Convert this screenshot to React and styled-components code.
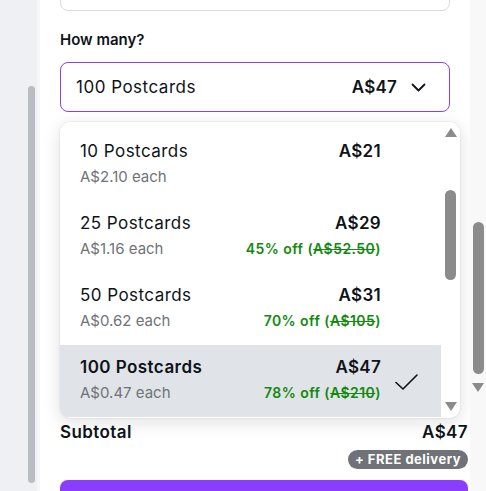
import React from "react";
import styled, { createGlobalStyle } from "styled-components";

const GlobalStyle = createGlobalStyle`
  html, body {
    margin: 0;
    padding: 0;
    height: 491px;
    overflow: hidden;
    background: #ffffff;
  }
  body {
    font-family: "Inter", "Noto Sans", sans-serif;
    color: #0e1318;
  }
`;

const Page = styled.div`
  display: flex;
  width: 486px;
  height: 491px;
  overflow: hidden;
`;

const LeftRail = styled.div`
  width: 40px;
  flex: none;
  background: #eff0f3;
  border-right: 3px solid #f6f7f8;
  padding: 86px 0 0 28px;
  box-sizing: border-box;
`;

const RailThumb = styled.div`
  width: 7px;
  height: 397px;
  border-radius: 4px;
  background: #b9bdc2;
`;

const Panel = styled.div`
  flex: 1;
  display: flex;
  flex-direction: column;
  padding: 0 2px 0 20px;
  background: #ffffff;
`;

const RightStrip = styled.div`
  width: 16px;
  flex: none;
  background: #f8f8f9;
  display: flex;
  flex-direction: column;
  align-items: center;
  padding-top: 222px;
  box-sizing: border-box;
`;

const Thumb = styled.div`
  width: 11px;
  height: ${(p) => p.$h}px;
  margin-top: ${(p) => p.$top || 0}px;
  border-radius: 6px;
  background: #8b8b8b;
  flex: none;
`;

const Arrow = styled.div`
  width: 0;
  height: 0;
  flex: none;
  border-left: 6px solid transparent;
  border-right: 6px solid transparent;
  ${(p) =>
    p.$up
      ? "border-bottom: 9px solid #8b8b8b;"
      : "border-top: 9px solid #8b8b8b;"}
  margin-top: ${(p) => p.$top || 0}px;
`;

const TopField = styled.div`
  height: 48px;
  margin: -37px 18px 0 0;
  border: 1px solid #d9dbdf;
  border-radius: 8px;
  box-sizing: border-box;
  flex: none;
`;

const Label = styled.div`
  margin-top: 19px;
  font-size: 15px;
  line-height: 20px;
  font-weight: 600;
`;

const Select = styled.div`
  margin: 12px 18px 0 0;
  height: 50px;
  flex: none;
  border: 1px solid #8b3dff;
  border-radius: 8px;
  box-sizing: border-box;
  display: flex;
  align-items: center;
  padding: 0 23px 0 15px;
  font-size: 17px;
  letter-spacing: 0.5px;
`;

const SelectText = styled.span`
  flex: 1;
`;

const SelectPrice = styled.span`
  font-weight: 600;
  letter-spacing: 0.2px;
  margin-right: 14px;
`;

const Listbox = styled.div`
  margin-top: 10px;
  width: 400px;
  height: 296px;
  flex: none;
  display: flex;
  border-radius: 10px;
  overflow: hidden;
  background: #ffffff;
  box-shadow: 0 0 0 1px rgba(14, 19, 24, 0.04), 0 4px 18px rgba(14, 19, 24, 0.13);
`;

const Options = styled.div`
  flex: 1;
  padding-top: 7px;
`;

const Option = styled.div`
  height: 72px;
  box-sizing: border-box;
  display: grid;
  grid-template-columns: 1fr auto 60px;
  grid-template-rows: 22px 20px;
  row-gap: 5px;
  align-content: start;
  padding: 11px 0 0 20px;
  background: ${(p) => (p.$selected ? "#e0e3e7" : "transparent")};
`;

const Title = styled.div`
  font-size: 17px;
  letter-spacing: 0.45px;
  line-height: 22px;
  font-weight: ${(p) => (p.$selected ? 600 : 400)};
`;

const Sub = styled.div`
  font-size: 15px;
  line-height: 20px;
  color: #6f7378;
`;

const Price = styled.div`
  font-size: 17px;
  letter-spacing: 0.3px;
  line-height: 22px;
  font-weight: 600;
  text-align: right;
`;

const Discount = styled.div`
  font-size: 14px;
  letter-spacing: 0.45px;
  line-height: 20px;
  font-weight: 600;
  color: #14890f;
  text-align: right;
  s {
    text-decoration-thickness: 1px;
  }
`;

const CheckCell = styled.div`
  grid-column: 3;
  grid-row: 1 / 3;
  display: flex;
  align-items: center;
  padding: 4px 0 0 14px;
`;

const ListScroll = styled.div`
  width: 19px;
  flex: none;
  display: flex;
  flex-direction: column;
  align-items: center;
  padding: 6px 0 7px;
  box-sizing: border-box;
`;

const Spacer = styled.div`
  flex: 1;
`;

const SubtotalRow = styled.div`
  margin-top: 3px;
  display: flex;
  justify-content: space-between;
  font-size: 17px;
  letter-spacing: 0.4px;
  line-height: 22px;
  font-weight: 600;
`;

const Pill = styled.div`
  align-self: flex-end;
  margin-top: 7px;
  height: 19px;
  padding: 0 7px;
  border-radius: 10px;
  background: #6f7277;
  color: #ffffff;
  font-size: 13px;
  letter-spacing: 0.5px;
  font-weight: 700;
  line-height: 19px;
`;

const BuyButton = styled.div`
  margin-top: 11px;
  height: 48px;
  flex: none;
  border-radius: 8px;
  background: #8b3dff;
`;

const options = [
  { qty: 10, price: 21, each: "2.10" },
  { qty: 25, price: 29, each: "1.16", off: 45, was: "52.50" },
  { qty: 50, price: 31, each: "0.62", off: 70, was: "105" },
  { qty: 100, price: 47, each: "0.47", off: 78, was: "210", selected: true },
];

const Check = () => (
  <svg width="23" height="16" viewBox="0 0 23 16" fill="none">
    <path d="M1 8.5l7 6.5L22 1" stroke="#0e1318" strokeWidth="1.6" strokeLinecap="round" strokeLinejoin="round" />
  </svg>
);

const Chevron = () => (
  <svg width="15" height="9" viewBox="0 0 15 9" fill="none">
    <path d="M1.5 1.5l6 6 6-6" stroke="#0e1318" strokeWidth="1.8" strokeLinecap="round" strokeLinejoin="round" />
  </svg>
);

export default function App() {
  return (
    <Page>
      <GlobalStyle />
      <LeftRail>
        <RailThumb />
      </LeftRail>
      <Panel>
        <TopField />
        <Label>How many?</Label>
        <Select>
          <SelectText>100 Postcards</SelectText>
          <SelectPrice>A$47</SelectPrice>
          <Chevron />
        </Select>
        <Listbox>
          <Options>
            {options.map((o) => (
              <Option key={o.qty} $selected={o.selected}>
                <Title $selected={o.selected}>{o.qty} Postcards</Title>
                <Price>A${o.price}</Price>
                <Sub>A${o.each} each</Sub>
                <Discount>
                  {o.off ? (
                    <>
                      {o.off}% off (<s>A${o.was}</s>)
                    </>
                  ) : null}
                </Discount>
                <CheckCell>{o.selected ? <Check /> : null}</CheckCell>
              </Option>
            ))}
          </Options>
          <ListScroll>
            <Arrow $up />
            <Thumb $h={90} $top={53} />
            <Spacer />
            <Arrow />
          </ListScroll>
        </Listbox>
        <SubtotalRow>
          <span>Subtotal</span>
          <span>A$47</span>
        </SubtotalRow>
        <Pill>+ FREE delivery</Pill>
        <BuyButton />
      </Panel>
      <RightStrip>
        <Thumb $h={152} />
        <Arrow $top={9} />
      </RightStrip>
    </Page>
  );
}
